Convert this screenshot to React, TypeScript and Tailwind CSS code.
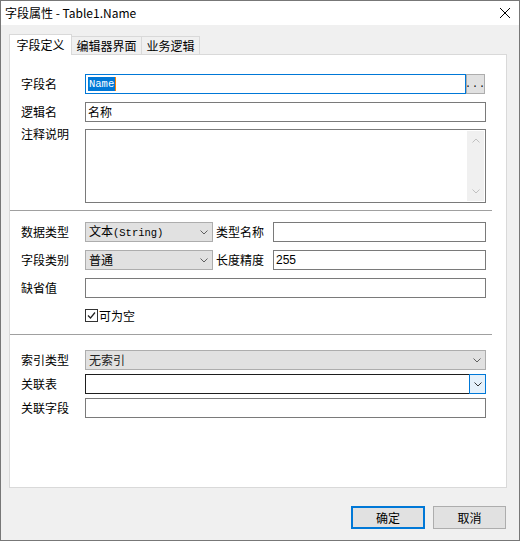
const ui = '"Noto Sans CJK SC", "Noto Sans", sans-serif';

function Chevron({ className = "" }: { className?: string }) {
  return (
    <svg viewBox="0 0 8 5" className={`h-[5px] w-[8px] ${className}`} fill="none" stroke="currentColor" strokeWidth="1">
      <path d="M0.5 0.5 L4 4 L7.5 0.5" />
    </svg>
  );
}

function Label({ children, className = "leading-[20px]" }: { children: React.ReactNode; className?: string }) {
  return <span className={`w-[64px] shrink-0 text-[12px] text-black ${className}`}>{children}</span>;
}

function TextBox({ children, className = "" }: { children?: React.ReactNode; className?: string }) {
  return (
    <div className={`flex h-[20px] items-center border border-[#7a7a7a] bg-white px-[2px] text-[12px] ${className}`}>
      {children}
    </div>
  );
}

function Select({ children, className = "" }: { children?: React.ReactNode; className?: string }) {
  return (
    <div className={`flex h-[20px] items-center justify-between border border-[#adadad] bg-[#e1e1e1] pl-[3px] pr-[4px] text-[12px] ${className}`}>
      <span className="leading-[18px]">{children}</span>
      <Chevron className="text-[#606060]" />
    </div>
  );
}

function Sep() {
  return <div className="mr-[14px] h-px bg-[#a0a0a0]" />;
}

export default function App() {
  return (
    <div
      className="flex h-[541px] w-[520px] flex-col border border-[#777] bg-[#f0f0f0] text-black"
      style={{ fontFamily: ui }}
    >
      {/* title bar */}
      <div className="flex h-[24px] shrink-0 items-center justify-between bg-white pl-[4px] pr-[9px]">
        <span className="text-[12px]">字段属性 - Table1.Name</span>
        <svg viewBox="0 0 10 10" className="h-[10px] w-[10px]" stroke="#000" strokeWidth="1">
          <path d="M0 0 L10 10 M10 0 L0 10" />
        </svg>
      </div>

      <div className="flex flex-1 flex-col px-[8px] pt-[9px]">
        {/* tabs */}
        <div className="flex h-[20px] items-end text-[12px]">
          <div className="relative z-10 -mb-px flex h-[21px] w-[63px] items-center justify-center border border-b-0 border-[#d9d9d9] bg-white">
            字段定义
          </div>
          <div className="flex h-[18px] w-[70px] items-center justify-center border border-l-0 border-b-0 border-[#d9d9d9] bg-[#f0f0f0]">
            编辑器界面
          </div>
          <div className="flex h-[18px] w-[58px] items-center justify-center border border-l-0 border-b-0 border-[#d9d9d9] bg-[#f0f0f0]">
            业务逻辑
          </div>
        </div>

        {/* panel */}
        <div className="flex h-[434px] w-[498px] flex-col border border-[#d9d9d9] bg-white pl-[11px] pt-[19px]">
          <div className="flex items-center">
            <Label>字段名</Label>
            <div className="flex h-[20px] w-[381px] items-center border border-[#0078d7] bg-white px-[2px]">
              <span className="bg-[#0078d7] px-px text-[10.5px] leading-[14px] text-white" style={{ fontFamily: '"Liberation Mono", monospace' }}>
                Name
              </span>
              <span className="h-[14px] w-px bg-[#ff8000]" />
            </div>
            <div className="flex h-[20px] w-[19px] items-end justify-center border border-[#adadad] bg-[#e1e1e1] pb-[3px] text-[10px] leading-[10px] tracking-[1px]" style={{ fontFamily: '"Liberation Mono", monospace' }}>
              ...
            </div>
          </div>

          <div className="mt-[8px] flex items-center">
            <Label>逻辑名</Label>
            <TextBox className="w-[401px]">名称</TextBox>
          </div>

          <div className="mt-[7px] flex items-start">
            <Label className="leading-[10px]">注释说明</Label>
            <div className="flex h-[74px] w-[401px] justify-end border border-[#7a7a7a] bg-white p-px">
              <div className="flex w-[17px] flex-col items-center justify-between bg-[#f0f0f0] py-[7px] text-[#c0c0c0]">
                <Chevron className="rotate-180" />
                <Chevron />
              </div>
            </div>
          </div>

          <div className="-ml-[11px] mt-[7px]">
            <Sep />
          </div>

          <div className="mt-[11px] flex items-center">
            <Label>数据类型</Label>
            <Select className="w-[128px]">
              文本<span className="text-[10.5px]" style={{ fontFamily: '"Liberation Mono", monospace' }}>(String)</span>
            </Select>
            <span className="ml-[3px] w-[57px] text-[12px]">类型名称</span>
            <TextBox className="w-[213px]" />
          </div>

          <div className="mt-[8px] flex items-center">
            <Label>字段类别</Label>
            <Select className="w-[128px]">普通</Select>
            <span className="ml-[3px] w-[57px] text-[12px]">长度精度</span>
            <TextBox className="w-[213px]">
              <span style={{ fontFamily: '"Liberation Sans", sans-serif' }}>255</span>
            </TextBox>
          </div>

          <div className="mt-[8px] flex items-center">
            <Label>缺省值</Label>
            <TextBox className="w-[401px]" />
          </div>

          <div className="ml-[64px] mt-[11px] flex h-[13px] items-center">
            <div className="flex h-[13px] w-[13px] items-center justify-center border border-[#333] bg-white">
              <svg viewBox="0 0 11 11" className="h-[11px] w-[11px]" fill="none" stroke="#222" strokeWidth="1.2">
                <path d="M2 5.5 L4.5 8 L9 2.5" />
              </svg>
            </div>
            <span className="ml-[1px] text-[12px] leading-[13px]">可为空</span>
          </div>

          <div className="-ml-[11px] mt-[12px]">
            <Sep />
          </div>

          <div className="mt-[15px] flex items-center">
            <Label>索引类型</Label>
            <Select className="w-[401px]">
              <span className="text-[#222]">无索引</span>
            </Select>
          </div>

          <div className="mt-[4px] flex items-center">
            <Label>关联表</Label>
            <div className="flex h-[20px] w-[401px] items-stretch border border-[#1e1e1e] bg-white">
              <div className="flex-1" />
              <div className="-my-px -mr-px flex w-[17px] items-center justify-center border border-[#0078d7] bg-[#e5f1fb] text-[#333]">
                <Chevron />
              </div>
            </div>
          </div>

          <div className="mt-[4px] flex items-center">
            <Label>关联字段</Label>
            <TextBox className="w-[401px]" />
          </div>
        </div>

        {/* buttons */}
        <div className="mt-[18px] flex justify-end gap-[8px] pr-[5px] text-[12px]">
          <div className="flex h-[23px] w-[74px] items-center justify-center border-2 border-[#0078d7] bg-[#e1e1e1]">确定</div>
          <div className="flex h-[23px] w-[73px] items-center justify-center border border-[#adadad] bg-[#e1e1e1]">取消</div>
        </div>
      </div>
    </div>
  );
}
